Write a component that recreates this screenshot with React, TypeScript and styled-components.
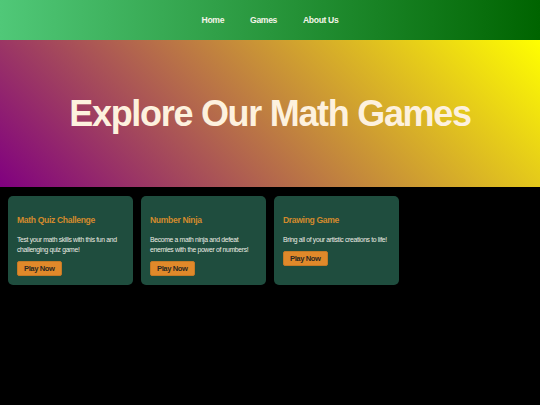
import React from 'react'
import styled, { createGlobalStyle } from 'styled-components'

const GlobalStyle = createGlobalStyle`
  html, body {
    margin: 0;
    padding: 0;
    background: #000000;
    font-family: 'Liberation Sans', Arial, sans-serif;
  }
`

const Header = styled.header`
  height: 40px;
  display: flex;
  align-items: center;
  justify-content: center;
  background: linear-gradient(to right, #50c878, #006400);
`

const Nav = styled.nav`
  display: flex;
  gap: 26px;
`

const NavLink = styled.a`
  color: #f4f4e8;
  font-size: 8.6px;
  letter-spacing: -0.35px;
  font-weight: bold;
  text-decoration: none;
  cursor: pointer;
`

const Hero = styled.section`
  height: 147px;
  display: flex;
  align-items: center;
  justify-content: center;
  background: linear-gradient(45deg, #800080, #ffff00);
`

const HeroTitle = styled.h1`
  margin: 0;
  color: #fdf1de;
  font-size: 36px;
  letter-spacing: -1.3px;
  font-weight: bold;
`

const GameList = styled.main`
  display: flex;
  gap: 8px;
  padding: 9px 8px;
`

const Card = styled.div`
  width: 125px;
  box-sizing: border-box;
  padding: 10px 8px 9px 9px;
  border-radius: 5px;
  background: #1f4d3e;
`

const CardTitle = styled.h3`
  margin: 9px 0 9px;
  color: #d38a2d;
  font-size: 8.6px;
  letter-spacing: -0.35px;
  line-height: 11px;
  font-weight: bold;
`

const CardText = styled.p`
  margin: 0;
  color: #ecece4;
  font-size: 6.8px;
  letter-spacing: -0.32px;
  line-height: 10px;
`

const PlayButton = styled.button`
  margin-top: 6px;
  height: 15px;
  padding: 0 6px;
  border: 1px solid #c47a26;
  border-radius: 2px;
  background: #e0892a;
  color: #2e2a22;
  font-family: inherit;
  font-size: 7.6px;
  letter-spacing: -0.4px;
  font-weight: bold;
  cursor: pointer;
`

const games = [
  {
    title: 'Math Quiz Challenge',
    text: 'Test your math skills with this fun and challenging quiz game!',
  },
  {
    title: 'Number Ninja',
    text: 'Become a math ninja and defeat enemies with the power of numbers!',
  },
  {
    title: 'Drawing Game',
    text: 'Bring all of your artistic creations to life!',
  },
]

export default function App() {
  return (
    <>
      <GlobalStyle />
      <Header>
        <Nav>
          <NavLink>Home</NavLink>
          <NavLink>Games</NavLink>
          <NavLink>About Us</NavLink>
        </Nav>
      </Header>
      <Hero>
        <HeroTitle>Explore Our Math Games</HeroTitle>
      </Hero>
      <GameList>
        {games.map((game) => (
          <Card key={game.title}>
            <CardTitle>{game.title}</CardTitle>
            <CardText>{game.text}</CardText>
            <PlayButton>Play Now</PlayButton>
          </Card>
        ))}
      </GameList>
    </>
  )
}
